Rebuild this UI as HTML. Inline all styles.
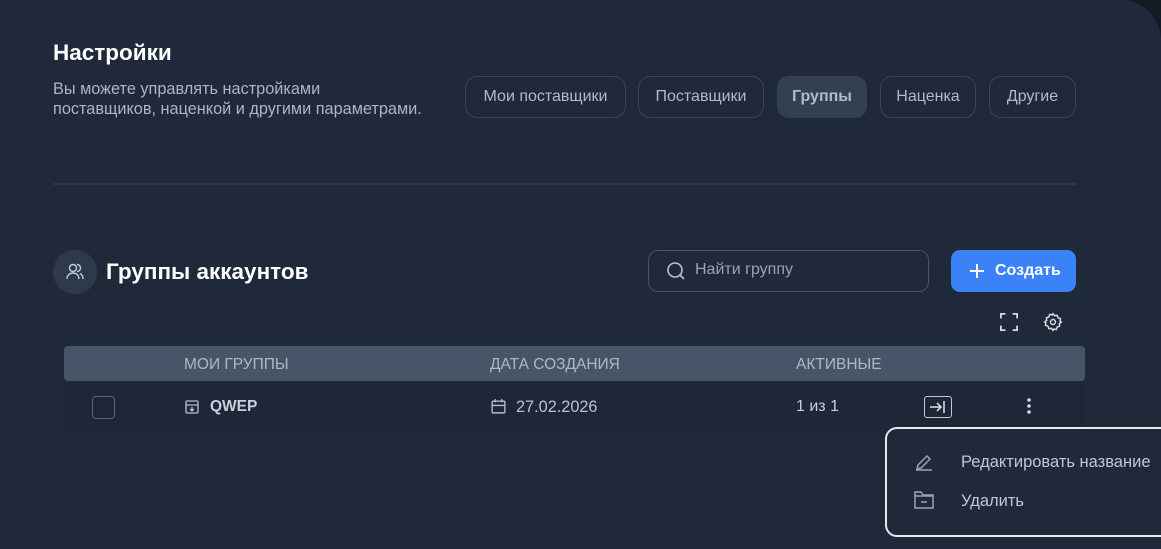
<!DOCTYPE html>
<html><head><meta charset="utf-8"><style>
*{box-sizing:border-box;margin:0;padding:0}
html,body{width:1161px;height:549px;overflow:hidden;background:#141a24;font-family:"Liberation Sans",sans-serif}
.panel{position:absolute;left:0;top:0;width:1161px;height:549px;background:#1f293a;border-top-right-radius:40px}
.a{position:absolute}
.tab{position:absolute;top:76px;height:42px;border:1px solid #3a4557;border-radius:12px;color:#aebbcc;font-size:16px;display:flex;align-items:center;justify-content:center}
.hd{color:#aeb8c6;font-size:15.5px;position:absolute;top:356px}
</style></head><body><div class="panel">
<div class="a" style="left:53px;top:40px;color:#fff;font-size:22.5px;font-weight:bold">Настройки</div>
<div class="a" style="left:53px;top:79px;color:#aab6c6;font-size:16.3px;line-height:20px">Вы можете управлять настройками<br>поставщиков, наценкой и другими параметрами.</div>
<div class="tab" style="left:465px;width:161px">Мои поставщики</div>
<div class="tab" style="left:638px;width:126px">Поставщики</div>
<div class="tab" style="left:777px;width:90px;background:#324052;border-color:#324052;font-weight:bold">Группы</div>
<div class="tab" style="left:880px;width:96px">Наценка</div>
<div class="tab" style="left:989px;width:87px">Другие</div>
<div class="a" style="left:53px;top:183px;width:1023px;height:2px;background:#2d3747"></div>
<div class="a" style="left:53px;top:250px;width:44px;height:44px;border-radius:50%;background:#2e3a4b"></div>
<svg class="a" style="left:64px;top:261px" width="22" height="22" viewBox="0 0 22 22" fill="none" stroke="#c4ccd8" stroke-width="1.4"><circle cx="9" cy="7" r="3.5"/><path d="M3 18c0-4 3-6 6-6s6 2 6 6M13 3.5a3.5 3.5 0 0 1 0 7M16 12.5c2 1 3 3 3 5.5"/></svg>
<div class="a" style="left:106px;top:259px;color:#fff;font-size:22.5px;font-weight:bold">Группы аккаунтов</div>
<div class="a" style="left:648px;top:250px;width:281px;height:42px;border:1px solid #485366;border-radius:10px"></div>
<svg class="a" style="left:665px;top:260px" width="22" height="22" viewBox="0 0 22 22" fill="none" stroke="#b8c2cf" stroke-width="1.6"><circle cx="10" cy="10" r="7"/><path d="M15 15l4 4"/></svg>
<div class="a" style="left:695px;top:261px;color:#98a4b4;font-size:16px">Найти группу</div>
<div class="a" style="left:951px;top:250px;width:125px;height:42px;border-radius:9px;background:#3b82f6;color:#fff;font-size:16px;font-weight:bold;padding:12px 0 0 44px">Создать</div>
<svg class="a" style="left:968px;top:262px" width="18" height="18" viewBox="0 0 18 18" stroke="#fff" stroke-width="2"><path d="M9 2v14M2 9h14"/></svg>
<svg class="a" style="left:1000px;top:313px" width="18" height="18" viewBox="0 0 20 20" fill="none" stroke="#d4dae2" stroke-width="2"><path d="M1 6V1h5M14 1h5v5M19 14v5h-5M6 19H1v-5"/></svg>
<svg class="a" style="left:1043px;top:312px" width="20" height="20" viewBox="0 0 24 24" fill="none" stroke="#d4dae2" stroke-width="1.8"><circle cx="12" cy="12" r="3"/><path d="M12 2l2 2.5 3-.5 1 3 3 1-.5 3L22 12l-2.5 2 .5 3-3 1-1 3-3-.5L12 22l-2-2.5-3 .5-1-3-3-1 .5-3L2 12l2.5-2-.5-3 3-1 1-3 3 .5z"/></svg>
<div class="a" style="left:64px;top:346px;width:1021px;height:35px;background:#475569;border-radius:4px"></div>
<div class="hd" style="left:184px">МОИ ГРУППЫ</div>
<div class="hd" style="left:490px">ДАТА СОЗДАНИЯ</div>
<div class="hd" style="left:796px">АКТИВНЫЕ</div>
<div class="a" style="left:64px;top:381px;width:1021px;height:52px;background:#1d2738"></div>
<div class="a" style="left:92px;top:396px;width:23px;height:23px;border:1px solid #5a6577;border-radius:4px"></div>
<svg class="a" style="left:184px;top:399px" width="16" height="16" viewBox="0 0 16 16" fill="none" stroke="#b5bfcc" stroke-width="1.3"><rect x="2" y="2" width="12" height="12" rx="1"/><path d="M2 6h12M8 8v4M6 10l2 2 2-2"/></svg>
<div class="a" style="left:210px;top:398px;color:#c8d0db;font-size:15.5px;font-weight:bold">QWEP</div>
<svg class="a" style="left:490px;top:398px" width="17" height="17" viewBox="0 0 16 16" fill="none" stroke="#b5bfcc" stroke-width="1.3"><rect x="2" y="3" width="12" height="11" rx="1"/><path d="M2 7h12M5 1v3M11 1v3"/></svg>
<div class="a" style="left:516px;top:398px;color:#b9c3cf;font-size:16.3px">27.02.2026</div>
<div class="a" style="left:796px;top:398px;color:#c8d0db;font-size:16px">1 из 1</div>
<div class="a" style="left:924px;top:396px;width:28px;height:22px;border:1px solid #c0c8d3;border-radius:3px"></div>
<svg class="a" style="left:929px;top:400px" width="18" height="14" viewBox="0 0 18 14" fill="none" stroke="#e0e5eb" stroke-width="1.5"><path d="M1 7h11M8 3l4 4-4 4M15 1v12"/></svg>
<svg class="a" style="left:1026px;top:397px" width="6" height="18"><circle cx="3" cy="3" r="1.8" fill="#d4dae2"/><circle cx="3" cy="9" r="1.8" fill="#d4dae2"/><circle cx="3" cy="15" r="1.8" fill="#d4dae2"/></svg>
<div class="a" style="left:885px;top:427px;width:290px;height:110px;border:2px solid #e6e9ee;border-radius:12px;background:#1f293a"></div>
<svg class="a" style="left:914px;top:452px" width="20" height="20" viewBox="0 0 20 20" fill="none" stroke="#9aa5b4" stroke-width="1.5"><path d="M2 18h16M3 17l1-4L13 4l3 3-9 9z"/></svg>
<div class="a" style="left:961px;top:453px;color:#c0c8d3;font-size:16.5px">Редактировать название</div>
<svg class="a" style="left:914px;top:491px" width="20" height="18" viewBox="0 0 20 18" fill="none" stroke="#9aa5b4" stroke-width="1.5"><path d="M1 1h6l2 3h10v13H1zM1 5h18M7 11h6"/></svg>
<div class="a" style="left:961px;top:492px;color:#c0c8d3;font-size:16.5px">Удалить</div>
</div></body></html>
